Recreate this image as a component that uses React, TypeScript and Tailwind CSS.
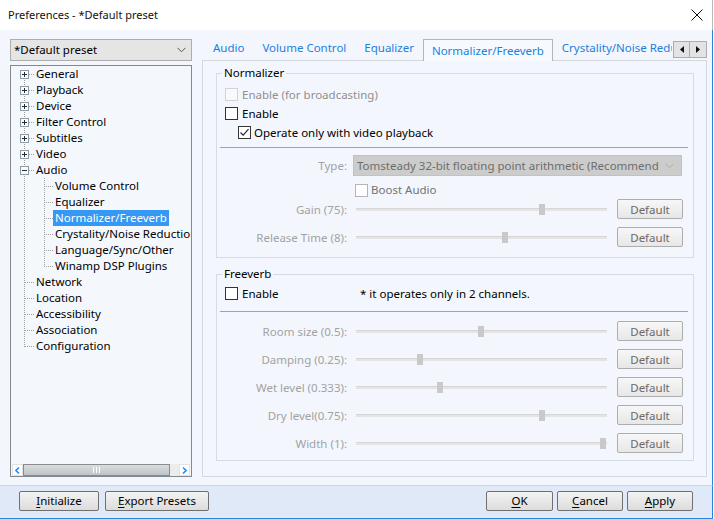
import React from "react";

type TreeItem = {
  label: string;
  level: 0 | 1;
  exp?: "+" | "-";
  first?: boolean;
  last?: boolean;
  selected?: boolean;
};

const tree: TreeItem[] = [
  { label: "General", level: 0, exp: "+", first: true },
  { label: "Playback", level: 0, exp: "+" },
  { label: "Device", level: 0, exp: "+" },
  { label: "Filter Control", level: 0, exp: "+" },
  { label: "Subtitles", level: 0, exp: "+" },
  { label: "Video", level: 0, exp: "+" },
  { label: "Audio", level: 0, exp: "-" },
  { label: "Volume Control", level: 1 },
  { label: "Equalizer", level: 1 },
  { label: "Normalizer/Freeverb", level: 1, selected: true },
  { label: "Crystality/Noise Reduction", level: 1 },
  { label: "Language/Sync/Other", level: 1 },
  { label: "Winamp DSP Plugins", level: 1, last: true },
  { label: "Network", level: 0 },
  { label: "Location", level: 0 },
  { label: "Accessibility", level: 0 },
  { label: "Association", level: 0 },
  { label: "Configuration", level: 0, last: true },
];

const DOT = "#a0a0a0";

function Gutter({ item }: { item: TreeItem }) {
  if (item.level === 0) {
    const y1 = item.first ? 8 : 0;
    const y2 = item.last ? 9 : 16;
    return (
      <svg width="23" height="16" className="shrink-0" shapeRendering="crispEdges">
        <line x1="13.5" y1={y1} x2="13.5" y2={y2} stroke={DOT} strokeDasharray="1 1" />
        <line x1={item.exp ? 18 : 14} y1="8.5" x2="23" y2="8.5" stroke={DOT} strokeDasharray="1 1" />
        {item.exp && (
          <g>
            <rect x="9.5" y="4.5" width="8" height="8" fill="#fbfcfd" stroke="#8e9aa6" />
            <line x1="11" y1="8.5" x2="16" y2="8.5" stroke="#2a2a2a" />
            {item.exp === "+" && <line x1="13.5" y1="6" x2="13.5" y2="11" stroke="#2a2a2a" />}
          </g>
        )}
      </svg>
    );
  }
  return (
    <svg width="42" height="16" className="shrink-0" shapeRendering="crispEdges">
      <line x1="13.5" y1="0" x2="13.5" y2="16" stroke={DOT} strokeDasharray="1 1" />
      <line x1="33.5" y1="0" x2="33.5" y2={item.last ? 9 : 16} stroke={DOT} strokeDasharray="1 1" />
      <line x1="35" y1="8.5" x2="42" y2="8.5" stroke={DOT} strokeDasharray="1 1" />
    </svg>
  );
}

function Check({ checked, variant }: { checked?: boolean; variant: "normal" | "faint" | "gray" }) {
  const cls =
    variant === "normal"
      ? "border-[#333333] bg-white"
      : variant === "faint"
      ? "border-[#d3d3d3] bg-[#f7f9fc]"
      : "border-[#b4b4b4] bg-white";
  return (
    <span className={`w-[13px] h-[13px] border ${cls} flex items-center justify-center shrink-0`}>
      {checked && (
        <svg width="11" height="11" viewBox="0 0 11 11">
          <path d="M1.5 5.5 L4.2 8.2 L9.5 2.2" fill="none" stroke="#222222" strokeWidth="1.1" />
        </svg>
      )}
    </span>
  );
}

function Slider({ thumb }: { thumb: number }) {
  return (
    <div className="relative w-[251px] h-[11px] flex items-center">
      <div className="w-full h-[3px] bg-[#e4e4e4] border-t border-[#d6d6d6]" />
      <div className="absolute top-0 w-[6px] h-[11px] bg-[#c9c9c9]" style={{ left: thumb - 356 - 3 }} />
    </div>
  );
}

function DefaultBtn() {
  return (
    <button className="ml-[10px] w-[66px] h-[20px] border border-[#adadad] rounded-[2px] bg-linear-to-b from-[#f7f7f7] to-[#e7e7e7] text-[#6a6a6a] leading-[16px] pt-[1px] flex items-center justify-center">
      Default
    </button>
  );
}

function SliderRow({ label, thumb, cls }: { label: string; thumb: number; cls?: string }) {
  return (
    <div className={`flex items-center h-[20px] ${cls ?? ""}`}>
      <div className="w-[130px] text-right text-[#a2a2a2] leading-[16px] pt-[2px]">{label}</div>
      <div className="ml-[9px]">
        <Slider thumb={thumb} />
      </div>
      <DefaultBtn />
    </div>
  );
}

function DlgBtn({ w, accel, rest }: { w: string; accel: string; rest: string }) {
  return (
    <button
      className={`${w} h-[20px] border border-[#707070] rounded-[2px] bg-linear-to-b from-[#f3f3f3] to-[#dcdcdc] leading-[16px] text-black flex items-center justify-center`}
    >
      <span className="underline underline-offset-2">{accel}</span>
      {rest}
    </button>
  );
}

export default function App() {
  return (
    <div className="w-[713px] h-[519px] flex flex-col border-b border-[#2a86dc] font-['Noto_Sans',sans-serif] text-[11.5px] text-black overflow-hidden">
      {/* Title bar */}
      <div className="h-[30px] shrink-0 bg-white border-r border-[#b9b9b9] flex items-center justify-between pl-[8px] pr-[9px]">
        <span className="text-[11px] leading-[16px] text-[#111]">Preferences - *Default preset</span>
        <svg width="12" height="12" viewBox="0 0 12 12">
          <path d="M0.5 0.5 L11.5 11.5 M11.5 0.5 L0.5 11.5" stroke="#111" strokeWidth="1" />
        </svg>
      </div>

      {/* Main */}
      <div className="h-[455px] shrink-0 bg-[#f3f7fd] border-r border-[#2a86dc] flex pl-[10px]">
        {/* Left column */}
        <div className="w-[182px] flex flex-col pt-[9px]">
          <div className="h-[22px] border border-[#adadad] bg-[#e5e5e5] flex items-center justify-between pl-[3px] pr-[5px]">
            <span className="leading-[16px]">*Default preset</span>
            <svg width="9" height="6" viewBox="0 0 9 6">
              <path d="M0.5 0.8 L4.5 4.8 L8.5 0.8" fill="none" stroke="#555" strokeWidth="1" />
            </svg>
          </div>
          <div className="mt-[4px] h-[412px] border border-[#828790] bg-[#f4f8fd] flex flex-col overflow-hidden">
            <div className="flex-1 flex flex-col overflow-hidden">
              {tree.map((it) => (
                <div key={it.label} className="h-[16px] flex items-center whitespace-nowrap">
                  <Gutter item={it} />
                  <span
                    className={`px-[2px] h-[16px] leading-[16px] ${
                      it.selected ? "bg-[#3598f4] text-white" : ""
                    }`}
                  >
                    {it.label}
                  </span>
                </div>
              ))}
            </div>
            {/* horizontal scrollbar */}
            <div className="h-[12px] flex pl-[1px] pr-[1px] shrink-0">
              <div className="w-[11px] h-[12px] bg-white border border-[#e2e2e2] flex items-center justify-center">
                <svg width="5" height="7" viewBox="0 0 5 7">
                  <path d="M4 0.5 L1 3.5 L4 6.5" fill="none" stroke="#1e90ff" strokeWidth="1.6" />
                </svg>
              </div>
              <div className="w-[148px] h-[12px] border border-[#8b8b8b] bg-linear-to-b from-[#d9dde0] to-[#bfc4c8] flex items-center justify-center gap-[2px]">
                <span className="w-[1px] h-[6px] bg-white" />
                <span className="w-[1px] h-[6px] bg-white" />
                <span className="w-[1px] h-[6px] bg-white" />
              </div>
              <div className="w-[9px] h-[12px] bg-[#ececec]" />
              <div className="w-[11px] h-[12px] bg-white border border-[#e2e2e2] flex items-center justify-center">
                <svg width="5" height="7" viewBox="0 0 5 7">
                  <path d="M1 0.5 L4 3.5 L1 6.5" fill="none" stroke="#1e90ff" strokeWidth="1.6" />
                </svg>
              </div>
            </div>
          </div>
        </div>

        {/* Right column */}
        <div className="ml-[10px] w-[505px] flex flex-col pt-[9px]">
          <div className="relative h-[22px] z-10 -mb-[1px]">
            <div className="w-[470px] h-[22px] flex overflow-hidden pl-[2px] whitespace-nowrap">
              <div className="h-[22px] px-[9px] pt-[1px] leading-[16px] text-[#1a80dc]">Audio</div>
              <div className="h-[22px] px-[9px] pt-[1px] leading-[16px] text-[#1a80dc]">Volume Control</div>
              <div className="h-[22px] px-[9px] pt-[1px] leading-[16px] text-[#1a80dc]">Equalizer</div>
              <div className="h-[22px] pl-[8px] pr-[8px] pt-[3px] leading-[16px] text-[#1a80dc] border-t border-l border-r border-[#b5b5b5] bg-[#f6faff]">
                Normalizer/Freeverb
              </div>
              <div className="h-[22px] px-[9px] pt-[1px] leading-[16px] text-[#1a80dc]">Crystality/Noise Reduction</div>
            </div>
            <div className="absolute right-0 top-[2px] flex">
              <div className="w-[17px] h-[17px] border border-[#adadad] bg-[#e3e3e3] flex items-center justify-center">
                <svg width="4" height="7" viewBox="0 0 4 7">
                  <path d="M4 0 L0 3.5 L4 7 Z" fill="#111" />
                </svg>
              </div>
              <div className="w-[17px] h-[17px] border border-l-0 border-[#adadad] bg-[#e3e3e3] flex items-center justify-center">
                <svg width="4" height="7" viewBox="0 0 4 7">
                  <path d="M0 0 L4 3.5 L0 7 Z" fill="#111" />
                </svg>
              </div>
            </div>
          </div>

          <div className="h-[417px] border border-[#d2d8de] bg-[#f3f7fd] pt-[4px] pl-[13px] pr-[12px]">
            {/* Normalizer group */}
            <fieldset className="border border-[#d5dbe2] pb-[10px]">
              <legend className="ml-[5px] px-[2px] leading-[16px]">Normalizer</legend>
              <div className="pt-[4px]">
                <div className="h-[19px] flex items-center pl-[8px] gap-[4px]">
                  <Check variant="faint" />
                  <span className="text-[#8f8f8f] leading-[16px]">Enable (for broadcasting)</span>
                </div>
                <div className="h-[19px] flex items-center pl-[8px] gap-[4px]">
                  <Check variant="normal" />
                  <span className="leading-[16px]">Enable</span>
                </div>
                <div className="h-[19px] flex items-center pl-[21px] gap-[3px]">
                  <Check variant="normal" checked />
                  <span className="leading-[16px]">Operate only with video playback</span>
                </div>
              </div>
              <div className="mt-[5px] ml-[3px] mr-[5px] h-[1px] bg-[#a3a3a3]" />
              <div className="mt-[7px] h-[21px] flex items-center">
                <div className="w-[130px] text-right text-[#a2a2a2] leading-[16px] pt-[1px]">Type:</div>
                <div className="ml-[6px] w-[329px] h-[21px] border border-[#c2c2c2] bg-[#cccccc] flex items-center justify-between pl-[3px] pr-[7px] overflow-hidden">
                  <span className="text-[#6d6d6d] leading-[16px] pt-[1px] whitespace-nowrap overflow-hidden w-[302px]">
                    Tomsteady 32-bit floating point arithmetic (Recommended)
                  </span>
                  <svg width="9" height="6" viewBox="0 0 9 6" className="shrink-0">
                    <path d="M0.5 0.8 L4.5 4.8 L8.5 0.8" fill="none" stroke="#a9a9a9" strokeWidth="1" />
                  </svg>
                </div>
              </div>
              <div className="mt-[5px] h-[18px] flex items-center pl-[138px] gap-[3px]">
                <Check variant="gray" />
                <span className="text-[#727272] leading-[16px]">Boost Audio</span>
              </div>
              <SliderRow label="Gain (75):" thumb={542} />
              <SliderRow label="Release Time (8):" thumb={505} cls="mt-[8px]" />
            </fieldset>

            {/* Freeverb group */}
            <fieldset className="mt-[8px] border border-[#d5dbe2] pb-[7px]">
              <legend className="ml-[5px] px-[2px] leading-[16px]">Freeverb</legend>
              <div className="pt-[2px] h-[21px] flex items-end">
                <div className="h-[19px] flex items-center pl-[8px]">
                  <div className="w-[135px] flex items-center gap-[4px]">
                    <Check variant="normal" />
                    <span className="leading-[16px]">Enable</span>
                  </div>
                  <span className="leading-[16px]">* it operates only in 2 channels.</span>
                </div>
              </div>
              <div className="mt-[8px] ml-[3px] mr-[5px] h-[1px] bg-[#a3a3a3]" />
              <SliderRow label="Room size (0.5):" thumb={481} cls="mt-[9px]" />
              <SliderRow label="Damping (0.25):" thumb={420} cls="mt-[8px]" />
              <SliderRow label="Wet level (0.333):" thumb={440} cls="mt-[8px]" />
              <SliderRow label="Dry level(0.75):" thumb={542} cls="mt-[8px]" />
              <SliderRow label="Width (1):" thumb={603} cls="mt-[8px]" />
            </fieldset>
          </div>
        </div>
      </div>

      {/* Bottom bar */}
      <div className="h-[33px] shrink-0 border-t border-r border-t-[#c6d6ec] border-r-[#2a86dc] bg-[#dfe9f8] flex items-start justify-between pt-[5px] pl-[19px] pr-[19px]">
        <div className="flex gap-[6px]">
          <DlgBtn w="w-[80px]" accel="I" rest="nitialize" />
          <DlgBtn w="w-[104px]" accel="E" rest="xport Presets" />
        </div>
        <div className="flex gap-[4px]">
          <DlgBtn w="w-[67px]" accel="O" rest="K" />
          <DlgBtn w="w-[66px]" accel="C" rest="ancel" />
          <DlgBtn w="w-[66px]" accel="A" rest="pply" />
        </div>
      </div>
    </div>
  );
}
